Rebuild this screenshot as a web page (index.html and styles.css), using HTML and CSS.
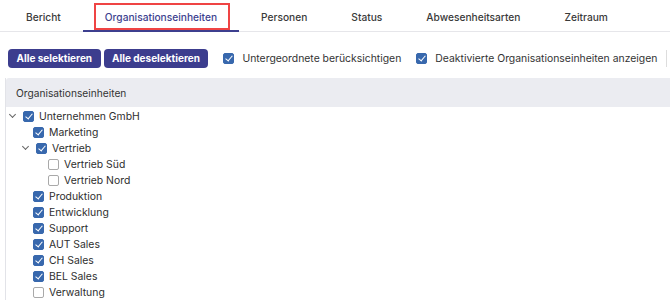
FILE: index.html
```html
<!DOCTYPE html>
<html lang="de">
<head>
  <meta charset="UTF-8">
  <meta name="viewport" content="width=device-width, initial-scale=1.0">
  <title>Organisationseinheiten</title>
  <link rel="stylesheet" href="styles.css">
</head>
<body>
  <nav class="tabs">
    <a class="tab">Bericht</a>
    <a class="tab active">Organisationseinheiten</a>
    <a class="tab">Personen</a>
    <a class="tab">Status</a>
    <a class="tab">Abwesenheitsarten</a>
    <a class="tab">Zeitraum</a>
  </nav>

  <div class="toolbar">
    <div class="btn-group">
      <button class="btn">Alle selektieren</button>
      <button class="btn">Alle deselektieren</button>
    </div>
    <label class="option"><span class="box checked"></span>Untergeordnete berücksichtigen</label>
    <label class="option"><span class="box checked"></span>Deaktivierte Organisationseinheiten anzeigen</label>
    <span class="cut-off"></span>
  </div>

  <section class="panel">
    <div class="panel-header">Organisationseinheiten</div>
    <ul class="tree">
      <li class="node lvl-0"><span class="toggle open"></span><span class="box checked"></span>Unternehmen GmbH</li>
      <li class="node lvl-1"><span class="toggle"></span><span class="box checked"></span>Marketing</li>
      <li class="node lvl-1 branch"><span class="toggle open"></span><span class="box checked"></span>Vertrieb</li>
      <li class="node lvl-2"><span class="toggle"></span><span class="box"></span>Vertrieb Süd</li>
      <li class="node lvl-2"><span class="toggle"></span><span class="box"></span>Vertrieb Nord</li>
      <li class="node lvl-1"><span class="toggle"></span><span class="box checked"></span>Produktion</li>
      <li class="node lvl-1"><span class="toggle"></span><span class="box checked"></span>Entwicklung</li>
      <li class="node lvl-1"><span class="toggle"></span><span class="box checked"></span>Support</li>
      <li class="node lvl-1"><span class="toggle"></span><span class="box checked"></span>AUT Sales</li>
      <li class="node lvl-1"><span class="toggle"></span><span class="box checked"></span>CH Sales</li>
      <li class="node lvl-1"><span class="toggle"></span><span class="box checked"></span>BEL Sales</li>
      <li class="node lvl-1"><span class="toggle"></span><span class="box"></span>Verwaltung</li>
    </ul>
  </section>
</body>
</html>
```

FILE: styles.css
```css
/* Basic styling */
* {
  margin: 0;
  padding: 0;
  box-sizing: border-box;
}

body {
  font-family: 'Inter', 'Liberation Sans', sans-serif;
  font-size: 10.2px;
  color: #333;
  background: #fff;
  overflow: hidden;
  width: 670px;
}

/* Tabs */
.tabs {
  display: flex;
  height: 32px;
  padding-left: 4px;
  border-bottom: 1px solid #e6e6ea;
}

.tab {
  position: relative;
  display: flex;
  align-items: center;
  padding: 3px 22px 0;
  font-size: 10.2px;
  font-weight: 500;
  color: #3a3a3a;
  white-space: nowrap;
}

.tab.active {
  color: #3d3f8f;
  border-bottom: 2px solid #3d3f8f;
  margin-bottom: -1px;
  padding-top: 4px;
}

/* red annotation frame round the active tab */
.tab.active::after {
  content: "";
  position: absolute;
  left: 11px;
  right: 9px;
  top: 3px;
  bottom: 0;
  border: 2px solid #ef4444;
}

/* Toolbar */
.toolbar {
  display: flex;
  align-items: center;
  height: 46px;
  padding: 6px 0 0 8px;
  white-space: nowrap;
}

.btn-group {
  display: flex;
  gap: 3px;
  margin-right: 15px;
}

.btn {
  font-family: inherit;
  font-size: 10px;
  font-weight: 700;
  color: #fff;
  background: #3c3d8e;
  border: none;
  border-radius: 4px;
  height: 19px;
  padding: 0 8.5px;
}

.option {
  display: flex;
  align-items: center;
  gap: 8px;
  margin-right: 15px;
  color: #333;
  font-size: 10.4px;
}

.cut-off {
  flex: none;
  width: 4px;
  height: 17px;
  border-left: 1px solid #ddd;
  margin-left: -6px;
}

/* Checkbox */
.box {
  flex: none;
  width: 11px;
  height: 11px;
  border: 1px solid #a9a9a9;
  border-radius: 2px;
  background: #fff;
  position: relative;
}

.box.checked {
  background: #3868ad;
  border-color: #3868ad;
}

.box.checked::after {
  content: "";
  position: absolute;
  left: 3px;
  top: 0px;
  width: 3px;
  height: 6px;
  border: solid #fff;
  border-width: 0 1.5px 1.5px 0;
  transform: rotate(40deg);
}

/* Panel */
.panel {
  margin-left: 5px;
  width: 700px;
  border-left: 1px solid #e2e3e8;
}

.panel-header {
  height: 29px;
  background: #ebecf1;
  display: flex;
  align-items: center;
  padding-left: 10px;
  border-top-left-radius: 3px;
  color: #333;
}

.tree {
  list-style: none;
  padding-top: 1px;
}

.node {
  display: flex;
  align-items: center;
  height: 16px;
  gap: 4px;
  font-size: 10.4px;
  color: #2e2e2e;
}

.node.lvl-0 { padding-left: 0; }
.node.lvl-1 { padding-left: 11px; }
.node.lvl-1.branch { padding-left: 14px; }
.node.lvl-2 { padding-left: 26px; }

.node.lvl-0 .toggle { margin-left: 1px; }

.toggle {
  flex: none;
  width: 12px;
  height: 12px;
  position: relative;
}

.toggle.open::after {
  content: "";
  position: absolute;
  left: 3px;
  top: 2px;
  width: 4px;
  height: 4px;
  border: solid #666;
  border-width: 0 1px 1px 0;
  transform: rotate(45deg);
}

.node .box {
  margin-right: 1px;
}
```
